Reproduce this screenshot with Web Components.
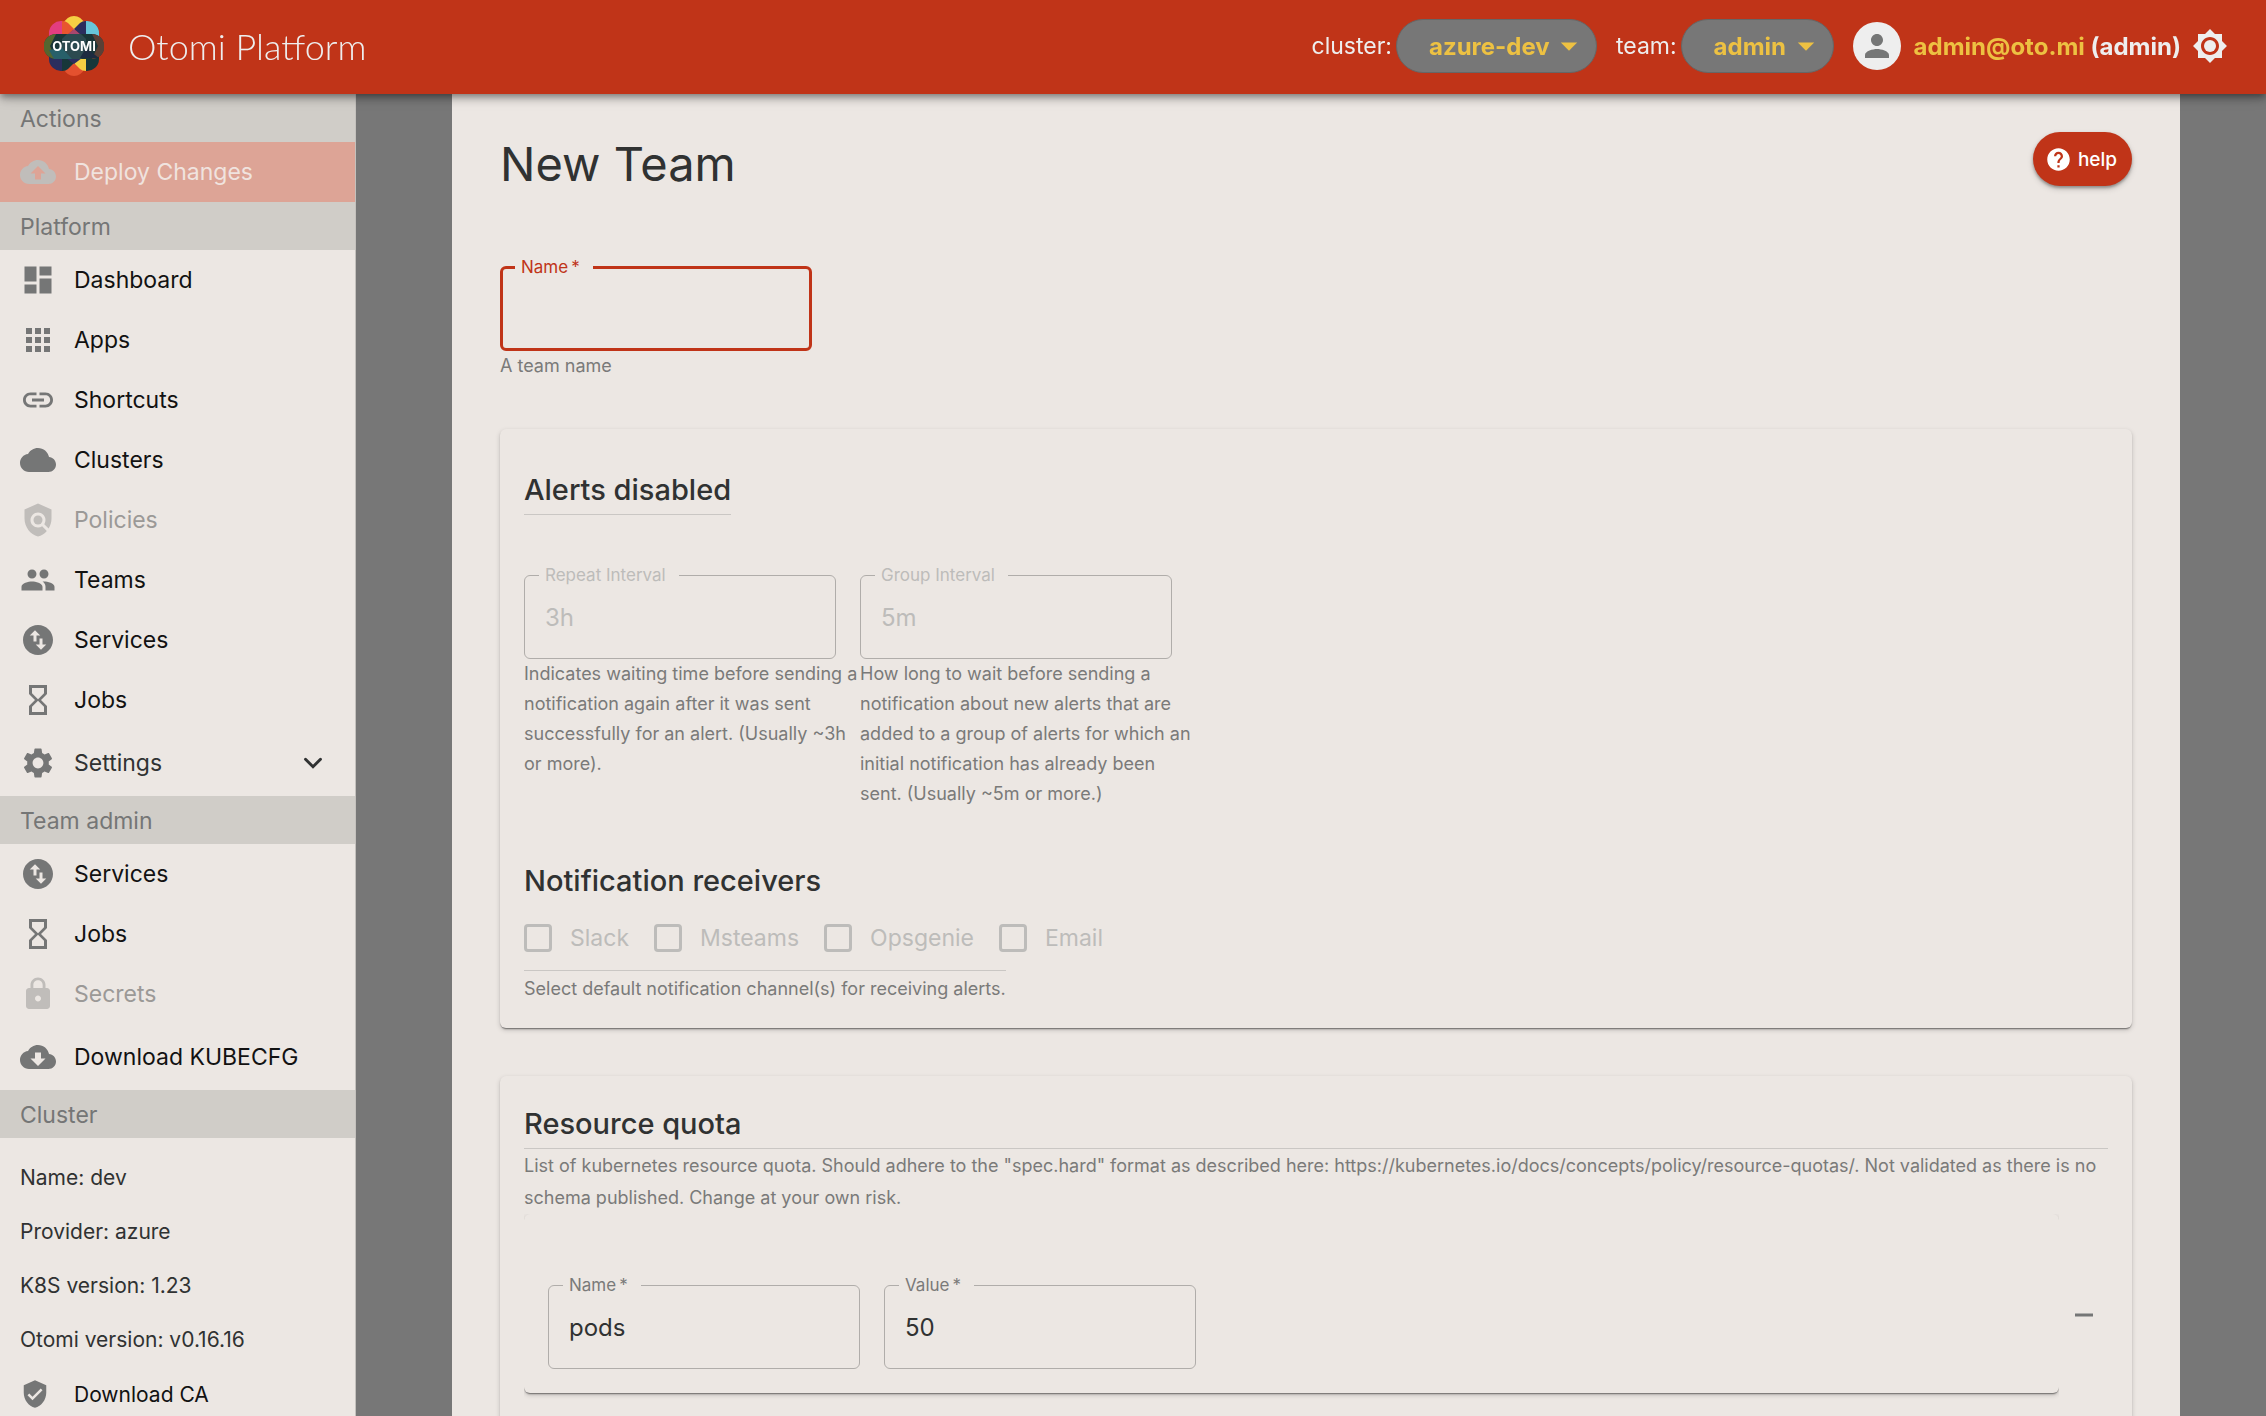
<!DOCTYPE html>
<html lang="en">
<head>
<meta charset="utf-8">
<title>Otomi Platform</title>
<style>
  :root {
    --red: #c03418;
    --paper: #ece7e3;
    --band: #d0cdc8;
    --grey: #777777;
    --icon: #757676;
    --text: #303232;
    --muted: #7a7a79;
    --faded: #bdbcba;
    --line: #cac7c4;
    --yellow: #edc142;
    --light: #eeeeee;
    --shadow: 0 3px 2px -2px rgba(0,0,0,.3), 0 1px 1px rgba(0,0,0,.22), 0 2px 5px rgba(0,0,0,.18);
  }
  html, body { margin: 0; height: 100%; }
  body {
    font-family: Inter, "Liberation Sans", sans-serif;
    font-size: 23px;
    color: var(--text);
    background: var(--grey);
  }
</style>
</head>
<body>
<otomi-app>
  <otomi-header slot="header"></otomi-header>
  <otomi-sidebar slot="nav"></otomi-sidebar>
  <team-form></team-form>
</otomi-app>

<script>
const ICONS = {
  upload: '<path d="M19.35 10.04C18.67 6.59 15.64 4 12 4 9.11 4 6.6 5.64 5.35 8.04 2.34 8.36 0 10.91 0 14c0 3.31 2.69 6 6 6h13c2.76 0 5-2.24 5-5 0-2.64-2.05-4.78-4.65-4.96zM14 13v4h-4v-4H7l5-5 5 5h-3z"/>',
  download: '<path d="M19.35 10.04C18.67 6.59 15.64 4 12 4 9.11 4 6.6 5.64 5.35 8.04 2.34 8.36 0 10.91 0 14c0 3.31 2.69 6 6 6h13c2.76 0 5-2.24 5-5 0-2.64-2.05-4.78-4.65-4.96zM17 13l-5 5-5-5h3V9h4v4h3z"/>',
  cloud: '<path d="M19.35 10.04C18.67 6.59 15.64 4 12 4 9.11 4 6.6 5.64 5.35 8.04 2.34 8.36 0 10.91 0 14c0 3.31 2.69 6 6 6h13c2.76 0 5-2.24 5-5 0-2.64-2.05-4.78-4.65-4.96z"/>',
  dashboard: '<path d="M3 13h8V3H3v10zm0 8h8v-6H3v6zm10 0h8V11h-8v10zm0-18v6h8V3h-8z"/>',
  apps: '<path d="M4 8h4V4H4v4zm6 12h4v-4h-4v4zm-6 0h4v-4H4v4zm0-6h4v-4H4v4zm6 0h4v-4h-4v4zm6-10v4h4V4h-4zm-6 4h4V4h-4v4zm6 6h4v-4h-4v4zm0 6h4v-4h-4v4z"/>',
  link: '<path d="M3.9 12c0-1.71 1.39-3.1 3.1-3.1h4V7H7c-2.76 0-5 2.24-5 5s2.24 5 5 5h4v-1.9H7c-1.71 0-3.1-1.39-3.1-3.1zM8 13h8v-2H8v2zm9-6h-4v1.9h4c1.71 0 3.1 1.39 3.1 3.1s-1.39 3.1-3.1 3.1h-4V17h4c2.76 0 5-2.24 5-5s-2.24-5-5-5z"/>',
  policy: '<path d="M21 5l-9-4-9 4v6c0 5.55 3.84 10.74 9 12 2.3-.56 4.33-1.9 5.88-3.71l-3.12-3.12c-1.94 1.29-4.58 1.07-6.29-.64-1.95-1.95-1.95-5.12 0-7.07 1.95-1.95 5.12-1.95 7.07 0 1.71 1.71 1.92 4.35.64 6.29l2.9 2.9C20.29 15.69 21 13.38 21 11V5z"/><circle cx="12" cy="12" r="3"/>',
  people: '<path d="M16 11c1.66 0 2.99-1.34 2.99-3S17.66 5 16 5c-1.66 0-3 1.34-3 3s1.34 3 3 3zm-8 0c1.66 0 2.99-1.34 2.99-3S9.66 5 8 5C6.34 5 5 6.34 5 8s1.34 3 3 3zm0 2c-2.33 0-7 1.17-7 3.5V19h14v-2.5c0-2.33-4.67-3.5-7-3.5zm8 0c-.29 0-.62.02-.97.05 1.16.84 1.97 1.97 1.97 3.45V19h6v-2.5c0-2.33-4.67-3.5-7-3.5z"/>',
  swap: '<path d="M12 2C6.48 2 2 6.48 2 12s4.48 10 10 10 10-4.48 10-10S17.52 2 12 2zM6.5 9L10 5.5 13.5 9H11v4H9V9H6.5zm11 6L14 18.5 10.5 15H13v-4h2v4h2.5z"/>',
  hourglass: '<path d="M6 2v6h.01L6 8.01 10 12l-4 4 .01.01H6V22h12v-5.99h-.01L18 16l-4-4 4-3.99-.01-.01H18V2H6zm10 14.5V20H8v-3.5l4-4 4 4zm-4-5l-4-4V4h8v3.5l-4 4z"/>',
  settings: '<path d="M19.14 12.94c.04-.3.06-.61.06-.94 0-.32-.02-.64-.07-.94l2.03-1.58c.18-.14.23-.41.12-.61l-1.92-3.32c-.12-.22-.37-.29-.59-.22l-2.39.96c-.5-.38-1.03-.7-1.62-.94l-.36-2.54c-.04-.24-.24-.41-.48-.41h-3.84c-.24 0-.43.17-.47.41l-.36 2.54c-.59.24-1.13.57-1.62.94l-2.39-.96c-.22-.08-.47 0-.59.22L2.74 8.87c-.12.21-.08.47.12.61l2.03 1.58c-.05.3-.09.63-.09.94s.02.64.07.94l-2.03 1.58c-.18.14-.23.41-.12.61l1.92 3.32c.12.22.37.29.59.22l2.39-.96c.5.38 1.03.7 1.62.94l.36 2.54c.05.24.24.41.48.41h3.84c.24 0 .44-.17.47-.41l.36-2.54c.59-.24 1.13-.56 1.62-.94l2.39.96c.22.08.47 0 .59-.22l1.92-3.32c.12-.22.07-.47-.12-.61l-2.01-1.58zM12 15.6c-1.98 0-3.6-1.62-3.6-3.6s1.62-3.6 3.6-3.6 3.6 1.62 3.6 3.6-1.62 3.6-3.6 3.6z"/>',
  lock: '<path d="M18 8h-1V6c0-2.76-2.24-5-5-5S7 3.24 7 6v2H6c-1.1 0-2 .9-2 2v10c0 1.1.9 2 2 2h12c1.1 0 2-.9 2-2V10c0-1.1-.9-2-2-2zm-6 9c-1.1 0-2-.9-2-2s.9-2 2-2 2 .9 2 2-.9 2-2 2zm3.1-9H8.9V6c0-1.71 1.39-3.1 3.1-3.1 1.71 0 3.1 1.39 3.1 3.1v2z"/>',
  verified: '<path d="M12 1L3 5v6c0 5.55 3.84 10.74 9 12 5.16-1.26 9-6.45 9-12V5l-9-4zm-2 16l-4-4 1.41-1.41L10 14.17l6.59-6.59L18 9l-8 8z"/>',
  chevron: '<path d="M7 9.500l5 5 5-5" fill="none" stroke="currentColor" stroke-width="2" stroke-linecap="round"/>',
  person: '<path d="M12 12c2.210 0 4-1.790 4-4s-1.790-4-4-4-4 1.790-4 4 1.790 4 4 4zm0 2c-2.670 0-8 1.340-8 4v2h16v-2c0-2.660-5.330-4-8-4z"/>',
  bright: '<path fill-rule="evenodd" d="M20 8.690V4h-4.690L12 .690 8.690 4H4v4.690L.690 12 4 15.310V20h4.690L12 23.310 15.310 20H20v-4.690L23.310 12zM12 18c-3.310 0-6-2.690-6-6s2.690-6 6-6 6 2.690 6 6-2.690 6-6 6z"/><circle cx="12" cy="12" r="4"/>',
  help: '<path d="M12 2C6.480 2 2 6.480 2 12s4.480 10 10 10 10-4.480 10-10S17.520 2 12 2zm1 17h-2v-2h2v2zm2.070-7.750l-.900.920C13.450 12.900 13 13.500 13 15h-2v-.500c0-1.100.450-2.100 1.170-2.830l1.240-1.260c.370-.360.590-.860.590-1.410 0-1.100-.900-2-2-2s-2 .900-2 2H8c0-2.210 1.790-4 4-4s4 1.790 4 4c0 .880-.360 1.680-.930 2.250z"/>',
  minus: '<path d="M6 11h12v2H6z"/>',
  caret: '<path d="M5 9h14l-7 7z"/>'
};

function define(name, markup) {
  customElements.define(name, class extends HTMLElement {
    connectedCallback() {
      if (this.shadowRoot) return;
      this.attachShadow({ mode: 'open' }).innerHTML =
        typeof markup === 'function' ? markup(this) : markup;
    }
  });
}

define('o-icon', el => `
  <style>
    :host { display: block; flex: none; width: 36px; height: 36px; }
    :host([size="s"]) { width: 30px; height: 30px; }
    :host([size="h"]) { width: 27px; height: 27px; }
    svg { display: block; width: 100%; height: 100%; fill: currentColor; }
  </style>
  <svg viewBox="0 0 24 24" aria-hidden="true">${ICONS[el.getAttribute('name')]}</svg>`);

define('otomi-logo', `
  <style>
    :host { display: block; flex: none; width: 60px; height: 60px; }
    svg { display: block; }
    text { font: 700 13px Inter, sans-serif; fill: #fff; }
  </style>
  <svg width="60" height="60" viewBox="0 0 60 60" role="img">
    <path d="M19 8Q23 0 30 0T41 8L30 14z" fill="#f5d043"/>
    <path d="M19 52Q23 60 30 60T41 52L30 46z" fill="#e4512f"/>
    <path d="M5 20V17A12 12 0 0 1 18 5V20z" fill="#e23d80"/>
    <path d="M18 5Q22 5 24 7L30 13 22 20H18z" fill="#e8552f"/>
    <path d="M42 5Q38 5 36 7L30 13 38 20H42z" fill="#2b2e5e"/>
    <path d="M55 20V17A12 12 0 0 0 42 5V20z" fill="#67c6d9"/>
    <path d="M5 40V43A12 12 0 0 0 18 55V40z" fill="#2b2e5e"/>
    <path d="M18 55Q22 55 24 53L30 47 22 40H18z" fill="#17373a"/>
    <path d="M42 55Q38 55 36 53L30 47 38 40H42z" fill="#f5d043"/>
    <path d="M55 40V43A12 12 0 0 1 42 55V40z" fill="#17373a"/>
    <path d="M22 20L30 13 38 20z" fill="#a8476f"/>
    <path d="M22 42L30 48 38 42z" fill="#2b2e5e"/>
    <rect y="18" width="60" height="25" rx="12" fill="#1a3638"/>
    <path d="M12 18A12 12 0 0 0 12 43L6 30z" fill="#54662f"/>
    <path d="M48 18A12 12 0 0 1 48 43L54 30z" fill="#5a4036"/>
    <path d="M18 30V23L23 18H37L42 23V38L37 43H23L18 38z" fill="#2c4a50"/>
    <path d="M5 34L18 32 28 43H10z" fill="#28606a"/>
    <path d="M42 32L55 42H36z" fill="#1d2b40"/>
    <text x="30" y="35" text-anchor="middle">OTOMI</text>
  </svg>`);

define('pill-select', el => `
  <style>
    :host { display: block; }
    label { display: flex; align-items: center; gap: 4px; color: var(--light); }
    .pill { position: relative; }
    select {
      appearance: none; display: block; height: 54px; margin: 0; padding: 0 46px 0 32px;
      border: 1px solid #666; border-radius: 27px; background: var(--grey);
      font: 700 24px Inter, sans-serif; color: var(--yellow); outline: 0;
    }
    o-icon { position: absolute; right: 14px; top: 13px; width: 28px; height: 28px; color: var(--yellow); pointer-events: none; }
  </style>
  <label><span>${el.getAttribute('label')}:</span>
    <span class="pill"><select><option>${el.getAttribute('value')}</option></select><o-icon name="caret"></o-icon></span>
  </label>`);

define('otomi-header', `
  <style>
    :host {
      display: flex; align-items: center; height: 94px; padding: 0 38px 2px 44px; box-sizing: border-box;
      background: var(--red); color: var(--light);
      box-shadow: 0 3px 6px -1px rgba(0,0,0,.3), 0 6px 8px rgba(0,0,0,.16), 0 2px 15px rgba(0,0,0,.14);
    }
    h1 { margin: 0 auto 0 24px; font: 300 36px Lato, sans-serif; }
    .right { display: flex; align-items: center; gap: 19px; }
    .user { display: flex; align-items: center; gap: 13px; font-size: 24px; font-weight: 700; }
    .avatar { display: grid; place-items: center; width: 48px; height: 48px; border-radius: 50%; background: var(--light); color: var(--icon); }
    a { color: var(--yellow); text-decoration: none; }
    button { margin: 0 0 0 -8px; padding: 0; border: 0; background: none; color: inherit; }
  </style>
  <otomi-logo></otomi-logo>
  <h1>Otomi Platform</h1>
  <div class="right">
    <pill-select label="cluster" value="azure-dev"></pill-select>
    <pill-select label="team" value="admin"></pill-select>
    <div class="user">
      <span class="avatar"><o-icon name="person"></o-icon></span>
      <span><a href="#account">admin@oto.mi</a> (admin)</span>
    </div>
    <button type="button" aria-label="Toggle theme"><o-icon name="bright"></o-icon></button>
  </div>`);

define('nav-heading', `
  <style>:host { display: block; padding: 2px 20px 0; line-height: 46px; background: var(--band); color: var(--icon); }</style>
  <slot></slot>`);

define('nav-item', el => `
  <style>
    :host { display: block; }
    a, button {
      display: flex; align-items: center; gap: 18px; width: 100%; height: 60px; box-sizing: border-box;
      margin: 0; padding: 0 24px 0 20px; border: 0; background: none;
      font: inherit; color: #121212; text-decoration: none; text-align: left;
    }
    o-icon { color: var(--icon); }
    span { flex: 1; }
    :host([tall]) a, button { height: 66px; }
    button, button o-icon:last-child { color: var(--text); }
    :host([disabled]) a { color: #9b9997; }
    :host([disabled]) o-icon { color: #c0bdba; }
    :host([disabled][deploy]) a { background: #dda496; color: #f0e3df; }
    :host([small]) a { height: 54px; font-size: 21px; gap: 24px; }
  </style>
  ${el.hasAttribute('expand')
    ? `<button type="button" aria-expanded="false"><o-icon name="${el.getAttribute('icon')}"></o-icon><span><slot></slot></span><o-icon name="chevron"></o-icon></button>`
    : `<a href="#"${el.hasAttribute('disabled') ? ' aria-disabled="true"' : ''}><o-icon name="${el.getAttribute('icon')}"${el.hasAttribute('small') ? ' size="s"' : ''}></o-icon><span><slot></slot></span></a>`}`);

define('otomi-sidebar', `
  <style>
    :host { display: block; width: 356px; box-sizing: border-box; border-right: 1px solid #c4c1bd; background: var(--paper); overflow-y: auto; scrollbar-width: none; }
    ul { list-style: none; margin: 0; padding: 13px 20px 0; font-size: 21px; line-height: 54px; }
  </style>
  <nav>
    <nav-heading>Actions</nav-heading>
    <nav-item icon="upload" disabled deploy>Deploy Changes</nav-item>
    <nav-heading>Platform</nav-heading>
    <nav-item icon="dashboard">Dashboard</nav-item>
    <nav-item icon="apps">Apps</nav-item>
    <nav-item icon="link">Shortcuts</nav-item>
    <nav-item icon="cloud">Clusters</nav-item>
    <nav-item icon="policy" disabled>Policies</nav-item>
    <nav-item icon="people">Teams</nav-item>
    <nav-item icon="swap">Services</nav-item>
    <nav-item icon="hourglass">Jobs</nav-item>
    <nav-item icon="settings" expand>Settings</nav-item>
    <nav-heading>Team admin</nav-heading>
    <nav-item icon="swap">Services</nav-item>
    <nav-item icon="hourglass">Jobs</nav-item>
    <nav-item icon="lock" disabled>Secrets</nav-item>
    <nav-item icon="download" tall>Download KUBECFG</nav-item>
    <nav-heading>Cluster</nav-heading>
    <ul>
      <li>Name: dev</li>
      <li>Provider: azure</li>
      <li>K8S version: 1.23</li>
      <li>Otomi version: v0.16.16</li>
    </ul>
    <nav-item icon="verified" small>Download CA</nav-item>
  </nav>`);

define('text-field', el => {
  const off = el.hasAttribute('disabled') ? ' disabled' : '';
  const req = el.hasAttribute('required');
  return `
  <style>
    :host { display: block; width: 336px; }
    fieldset { width: 312px; box-sizing: border-box; margin: 0; padding: 0 0 8px; border: 1px solid #b0adaa; border-radius: 6px; min-width: 0; }
    legend { margin-left: 14px; padding: 0 13px 0 6px; font-size: 17px; line-height: 18px; color: var(--muted); }
    input {
      display: block; width: 100%; height: 66px; box-sizing: border-box; margin: 0; padding: 0 20px;
      border: 0; outline: 0; background: none; font: 400 24px Inter, sans-serif; color: var(--text);
    }
    :host([disabled]) legend, input:disabled { color: var(--faded); }
    :host([active]) fieldset { border: 3px solid var(--red); }
    :host([active]) legend { margin-left: 12px; color: var(--red); }
    :host([active]) input { height: 64px; }
    p { margin: 0; font-size: 18px; line-height: 30px; color: var(--muted); }
  </style>
  <fieldset>
    <legend><label for="f">${el.getAttribute('label')}${req ? '&thinsp;*' : ''}</label></legend>
    <input id="f" type="text" value="${el.getAttribute('value') || ''}"${off}>
  </fieldset>
  ${el.hasAttribute('hint') ? `<p>${el.getAttribute('hint')}</p>` : ''}`;
});

define('check-item', el => `
  <style>
    :host { display: block; }
    label { display: flex; align-items: center; gap: 18px; color: var(--faded); }
    input { appearance: none; width: 28px; height: 28px; margin: 0; border: 3px solid var(--faded); border-radius: 4px; }
  </style>
  <label><input type="checkbox" disabled>${el.getAttribute('label')}</label>`);

define('o-card', `
  <style>:host { display: block; border-radius: 6px; background: var(--paper); box-shadow: var(--shadow); }</style>
  <slot></slot>`);

define('help-button', `
  <style>
    button {
      display: flex; align-items: center; gap: 6px; height: 54px; padding: 0 15px 0 12px; border: 0; border-radius: 27px;
      background: var(--red); color: #fff; font: 500 19px Inter, sans-serif;
      box-shadow: 0 2px 3px rgba(0,0,0,.3), 0 3px 6px rgba(0,0,0,.16);
    }
  </style>
  <button type="button"><o-icon name="help" size="h"></o-icon>help</button>`);

define('team-form', `
  <style>
    :host { display: block; box-sizing: border-box; min-height: 100%; padding: 38px 48px 48px; background: var(--paper); }
    header { display: flex; justify-content: space-between; align-items: flex-start; height: 54px; margin-bottom: 72px; }
    h2 { margin: 0; font-size: 47px; font-weight: 400; line-height: 64px; }
    h3 { margin: 0; font-size: 29px; font-weight: 500; line-height: 48px; }
    p { margin: 0; font-size: 18px; color: var(--muted); }
    .fields { display: flex; }
    o-card { margin-top: 48px; padding: 24px; }
    .alerts { padding-top: 37px; }
    .alerts .under { width: fit-content; margin-bottom: 51px; }
    .under { border-bottom: 1px solid var(--line); }
    .receivers { margin-top: 48px; }
    .checks { display: flex; gap: 25px; height: 65px; align-items: center; }
    .foot { width: fit-content; padding-top: 3px; border-top: 1px solid var(--line); line-height: 30px; }
    .desc { padding-top: 1px; line-height: 32px; }
    .row { display: flex; align-items: center; }
    .clip { flex: 1; overflow: hidden; padding-bottom: 22px; }
    .clip o-card { margin: 0; padding: 62px 24px 24px; }
    .remove { display: grid; place-items: center; width: 49px; height: 49px; padding: 0; border: 0; background: none; color: var(--icon); }
  </style>
  <header><h2>New Team</h2><help-button></help-button></header>
  <text-field label="Name" required active hint="A team name"></text-field>
  <o-card class="alerts">
    <h3 class="under">Alerts disabled</h3>
    <div class="fields">
      <text-field label="Repeat Interval" value="3h" disabled hint="Indicates waiting time before sending a notification again after it was sent successfully for an alert. (Usually ~3h or more)."></text-field>
      <text-field label="Group Interval" value="5m" disabled hint="How long to wait before sending a notification about new alerts that are added to a group of alerts for which an initial notification has already been sent. (Usually ~5m or more.)"></text-field>
    </div>
    <h3 class="receivers">Notification receivers</h3>
    <div class="checks">
      <check-item label="Slack"></check-item>
      <check-item label="Msteams"></check-item>
      <check-item label="Opsgenie"></check-item>
      <check-item label="Email"></check-item>
    </div>
    <p class="foot">Select default notification channel(s) for receiving alerts.</p>
  </o-card>
  <o-card>
    <h3 class="under">Resource quota</h3>
    <p class="desc">List of kubernetes resource quota. Should adhere to the "spec.hard" format as described here: https://kubernetes.io/docs/concepts/policy/resource-quotas/. Not validated as there is no schema published. Change at your own risk.</p>
    <div class="row">
      <div class="clip">
        <o-card>
          <div class="fields">
            <text-field label="Name" value="pods" required></text-field>
            <text-field label="Value" value="50" required></text-field>
          </div>
        </o-card>
      </div>
      <button class="remove" type="button" aria-label="Remove"><o-icon name="minus"></o-icon></button>
    </div>
  </o-card>`);

define('otomi-app', `
  <style>
    :host { display: flex; flex-direction: column; height: 100vh; }
    ::slotted([slot="header"]) { flex: none; z-index: 1; }
    .body { display: flex; flex: 1; min-height: 0; }
    ::slotted([slot="nav"]) { flex: none; }
    main { flex: 1; min-width: 0; padding: 0 86px 0 96px; overflow-y: auto; scrollbar-width: none; }
  </style>
  <slot name="header"></slot>
  <div class="body">
    <slot name="nav"></slot>
    <main><slot></slot></main>
  </div>`);
</script>
</body>
</html>
